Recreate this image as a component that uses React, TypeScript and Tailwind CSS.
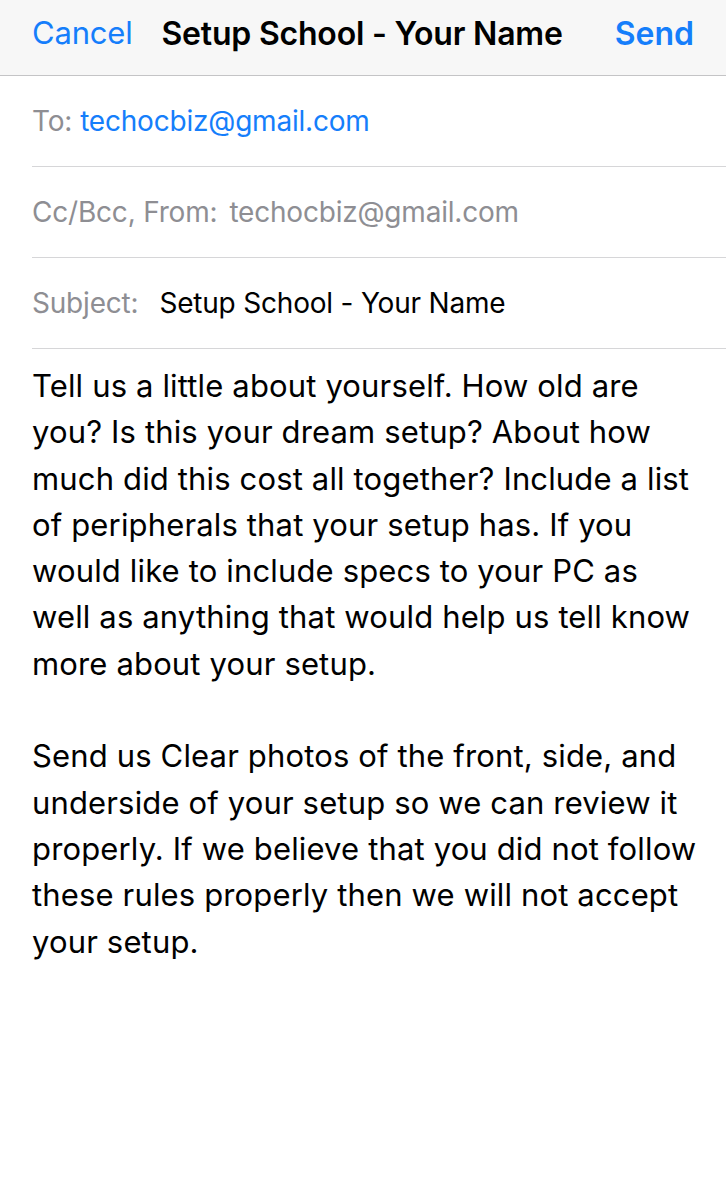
import React from "react";

const body1 = [
  "Tell us a little about yourself. How old are",
  "you? Is this your dream setup? About how",
  "much did this cost all together? Include a list",
  "of peripherals that your setup has. If you",
  "would like to include specs to your PC as",
  "well as anything that would help us tell know",
  "more about your setup.",
];

const body2 = [
  "Send us Clear photos of the front, side, and",
  "underside of your setup so we can review it",
  "properly. If we believe that you did not follow",
  "these rules properly then we will not accept",
  "your setup.",
];

export default function App() {
  return (
    <div
      className="w-[726px] min-h-[1200px] bg-white text-black"
      style={{ fontFamily: "Inter, 'Noto Sans', sans-serif" }}
    >
      {/* Top bar */}
      <div className="h-[76px] bg-[#f7f7f7] border-b border-[#c4c4c6] flex items-center pl-[32px] pr-[32px] pb-[8px]">
        <span className="text-[31px] text-[#157efb] tracking-[-0.2px]">Cancel</span>
        <span className="ml-[29px] text-[32px] font-semibold tracking-[-0.2px]">Setup School - Your Name</span>
        <span className="ml-auto text-[32px] font-semibold text-[#157efb]">Send</span>
      </div>

      {/* Header fields */}
      <div className="pl-[32px]">
        <div className="h-[91px] border-b border-[#d6d6d8] flex items-center gap-[8px] text-[28px] tracking-[-0.2px]">
          <span className="text-[#8e8e93]">To:</span>
          <span className="text-[#157efb]">techocbiz@gmail.com</span>
        </div>
        <div className="h-[91px] border-b border-[#d6d6d8] flex items-center gap-[12px] text-[28px] tracking-[-0.2px]">
          <span className="text-[#8e8e93]">Cc/Bcc, From:</span>
          <span className="text-[#8e8e93]">techocbiz@gmail.com</span>
        </div>
        <div className="h-[91px] border-b border-[#d6d6d8] flex items-center gap-[21px] text-[28px] tracking-[-0.2px]">
          <span className="text-[#8e8e93]">Subject:</span>
          <span className="text-black">Setup School - Your Name</span>
        </div>
      </div>

      {/* Body */}
      <div className="pl-[32px] pt-[14px] text-[31px] leading-[46.3px] tracking-[0.15px]">
        {body1.map((l) => (
          <div key={l} className="whitespace-nowrap">{l}</div>
        ))}
        <div className="h-[46.3px]" />
        {body2.map((l) => (
          <div key={l} className="whitespace-nowrap">{l}</div>
        ))}
      </div>
    </div>
  );
}
